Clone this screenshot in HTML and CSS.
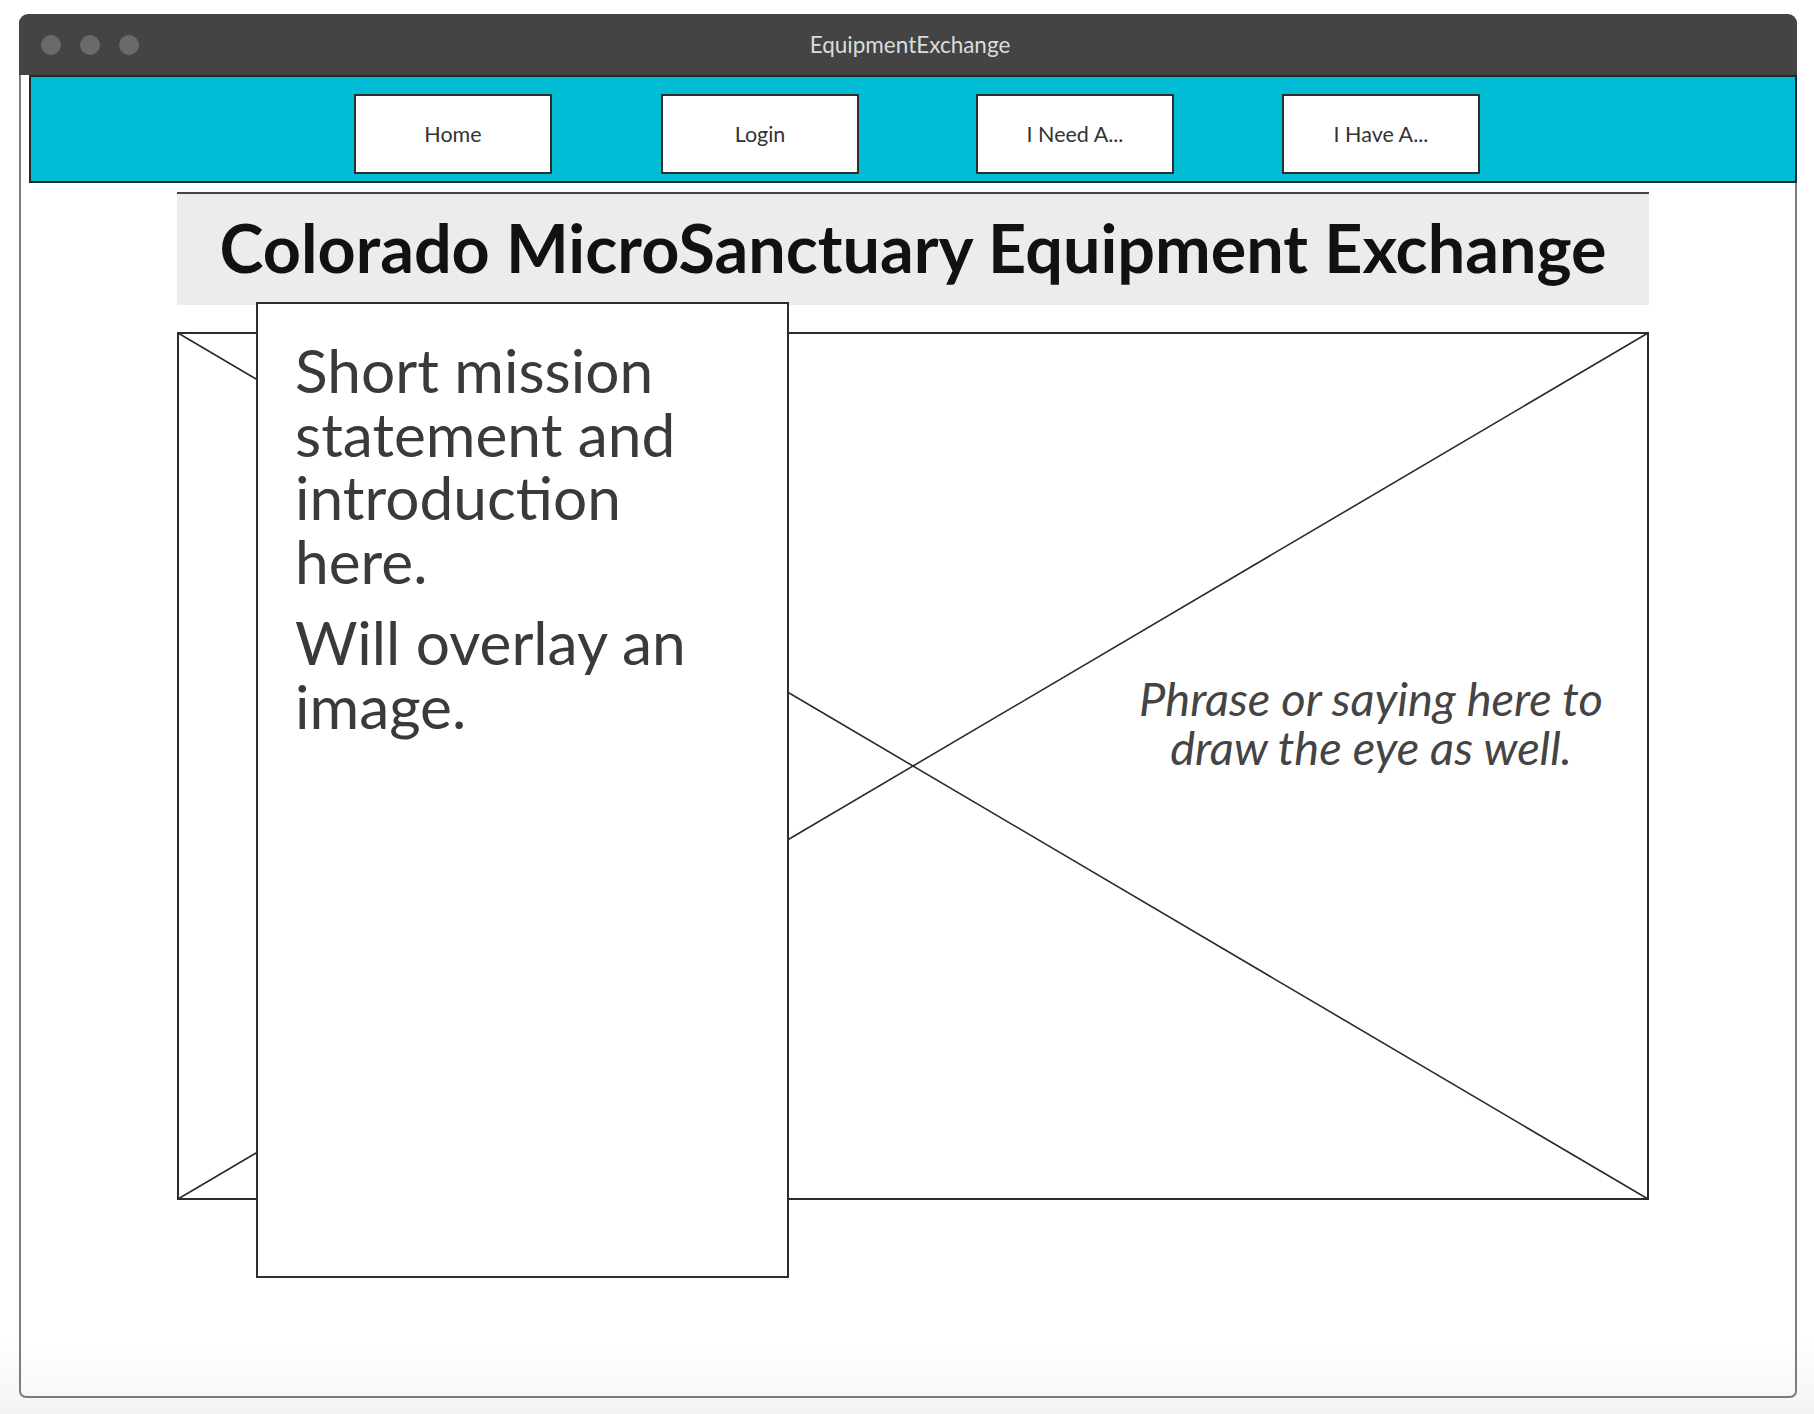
FILE: index.html
```html
<!DOCTYPE html>
<html lang="en">
<head>
<meta charset="utf-8">
<title>EquipmentExchange</title>
<link rel="stylesheet" href="styles.css">
</head>
<body>
<div class="window">
  <div class="titlebar">
    <div class="lights"><span class="light"></span><span class="light"></span><span class="light"></span></div>
    <div class="wtitle">EquipmentExchange</div>
    <div class="spacer"></div>
  </div>
  <div class="wbody">
    <nav class="nav">
      <a class="navbtn">Home</a>
      <a class="navbtn navbtn-login">Login</a>
      <a class="navbtn navbtn-need">I Need A...</a>
      <a class="navbtn">I Have A...</a>
    </nav>
    <main class="content">
      <header class="banner"><h1 class="banner-title">Colorado MicroSanctuary Equipment Exchange</h1></header>
      <section class="hero">
        <svg class="placeholder" viewBox="0 0 1472 868" preserveAspectRatio="none" aria-hidden="true">
          <rect x="1" y="1" width="1470" height="866" fill="#fff" stroke="#2b2b2b" stroke-width="2"/>
          <line x1="1" y1="1" x2="1471" y2="867" stroke="#2b2b2b" stroke-width="1.6"/>
          <line x1="1" y1="867" x2="1471" y2="1" stroke="#2b2b2b" stroke-width="1.6"/>
        </svg>
        <div class="card">
          <p class="card-text">Short mission statement and introduction here.</p>
          <p class="card-text">Will overlay an image.</p>
        </div>
        <p class="phrase">Phrase or saying here to draw the eye as well.</p>
      </section>
    </main>
  </div>
</div>
</body>
</html>
```

FILE: styles.css
```css
html, body {
  margin: 0;
  padding: 0;
}

body {
  width: 1814px;
  height: 1414px;
  overflow: hidden;
  background: linear-gradient(to bottom, #ffffff 0, #ffffff 1340px, #f3f3f3 1414px);
  font-family: Lato, "Open Sans", "Liberation Sans", sans-serif;
  color: #333;
}

.window {
  margin: 14px 0 0 19px;
  width: 1778px;
  height: 1384px;
  display: flex;
  flex-direction: column;
}

.titlebar {
  height: 61px;
  flex: 0 0 61px;
  background: #444444;
  border-radius: 9px 9px 0 0;
  display: grid;
  grid-template-columns: 1fr auto 1fr;
  align-items: center;
}

.lights {
  display: flex;
  gap: 19px;
  padding-left: 22px;
}

.light {
  width: 20px;
  height: 20px;
  border-radius: 50%;
  background: #6a6a6a;
}

.wtitle {
  color: #dcdcdc;
  font-size: 22.5px;
  padding-left: 4px;
}

.wbody {
  flex: 1;
  border: 2px solid #7c7c7c;
  border-top: none;
  border-radius: 0 0 7px 7px;
  padding-left: 8px;
  background: linear-gradient(to bottom, #ffffff 0, #ffffff calc(100% - 50px), #f8f8f8 100%);
}

.nav {
  box-sizing: border-box;
  height: 108px;
  margin-right: -2px;
  background: #00bcd4;
  border: 2px solid #1e2a2c;
  display: flex;
  justify-content: flex-start;
  gap: 108px;
  padding: 17px 0 0 323px;
}

.navbtn {
  box-sizing: border-box;
  width: 198px;
  height: 80px;
  background: #fff;
  border: 2px solid #2e2e2e;
  border-radius: 1px;
  display: flex;
  align-items: center;
  justify-content: center;
  font-size: 21.5px;
  color: #333;
  text-decoration: none;
}

.navbtn-login {
  margin-left: 1px;
}

.navbtn-need {
  margin-left: 9px;
}

.content {
  padding-left: 148px;
}

.banner {
  box-sizing: border-box;
  width: 1472px;
  height: 113px;
  margin-top: 9px;
  border-top: 2px solid #444;
  background: #ececec;
  display: flex;
  align-items: center;
  justify-content: center;
}

.banner-title {
  margin: 0;
  font-size: 66.5px;
  font-weight: 700;
  color: #111;
  letter-spacing: 0;
  padding-bottom: 6px;
}

.hero {
  position: relative;
  width: 1472px;
  height: 868px;
  margin-top: 27px;
}

.placeholder {
  display: block;
  width: 1472px;
  height: 868px;
}

.card {
  position: absolute;
  left: 79px;
  top: -30px;
  box-sizing: border-box;
  width: 533px;
  height: 976px;
  background: #fff;
  border: 2px solid #2e2e2e;
  padding: 34px 70px 0 37px;
}

.card-text {
  margin: 0 0 18px 0;
  font-size: 60.4px;
  line-height: 63.5px;
  color: #3a3a3a;
}

.phrase {
  position: absolute;
  left: 944px;
  top: 342px;
  width: 500px;
  margin: 0;
  text-align: center;
  font-style: italic;
  font-size: 47px;
  line-height: 49px;
  color: #444;
}
```
